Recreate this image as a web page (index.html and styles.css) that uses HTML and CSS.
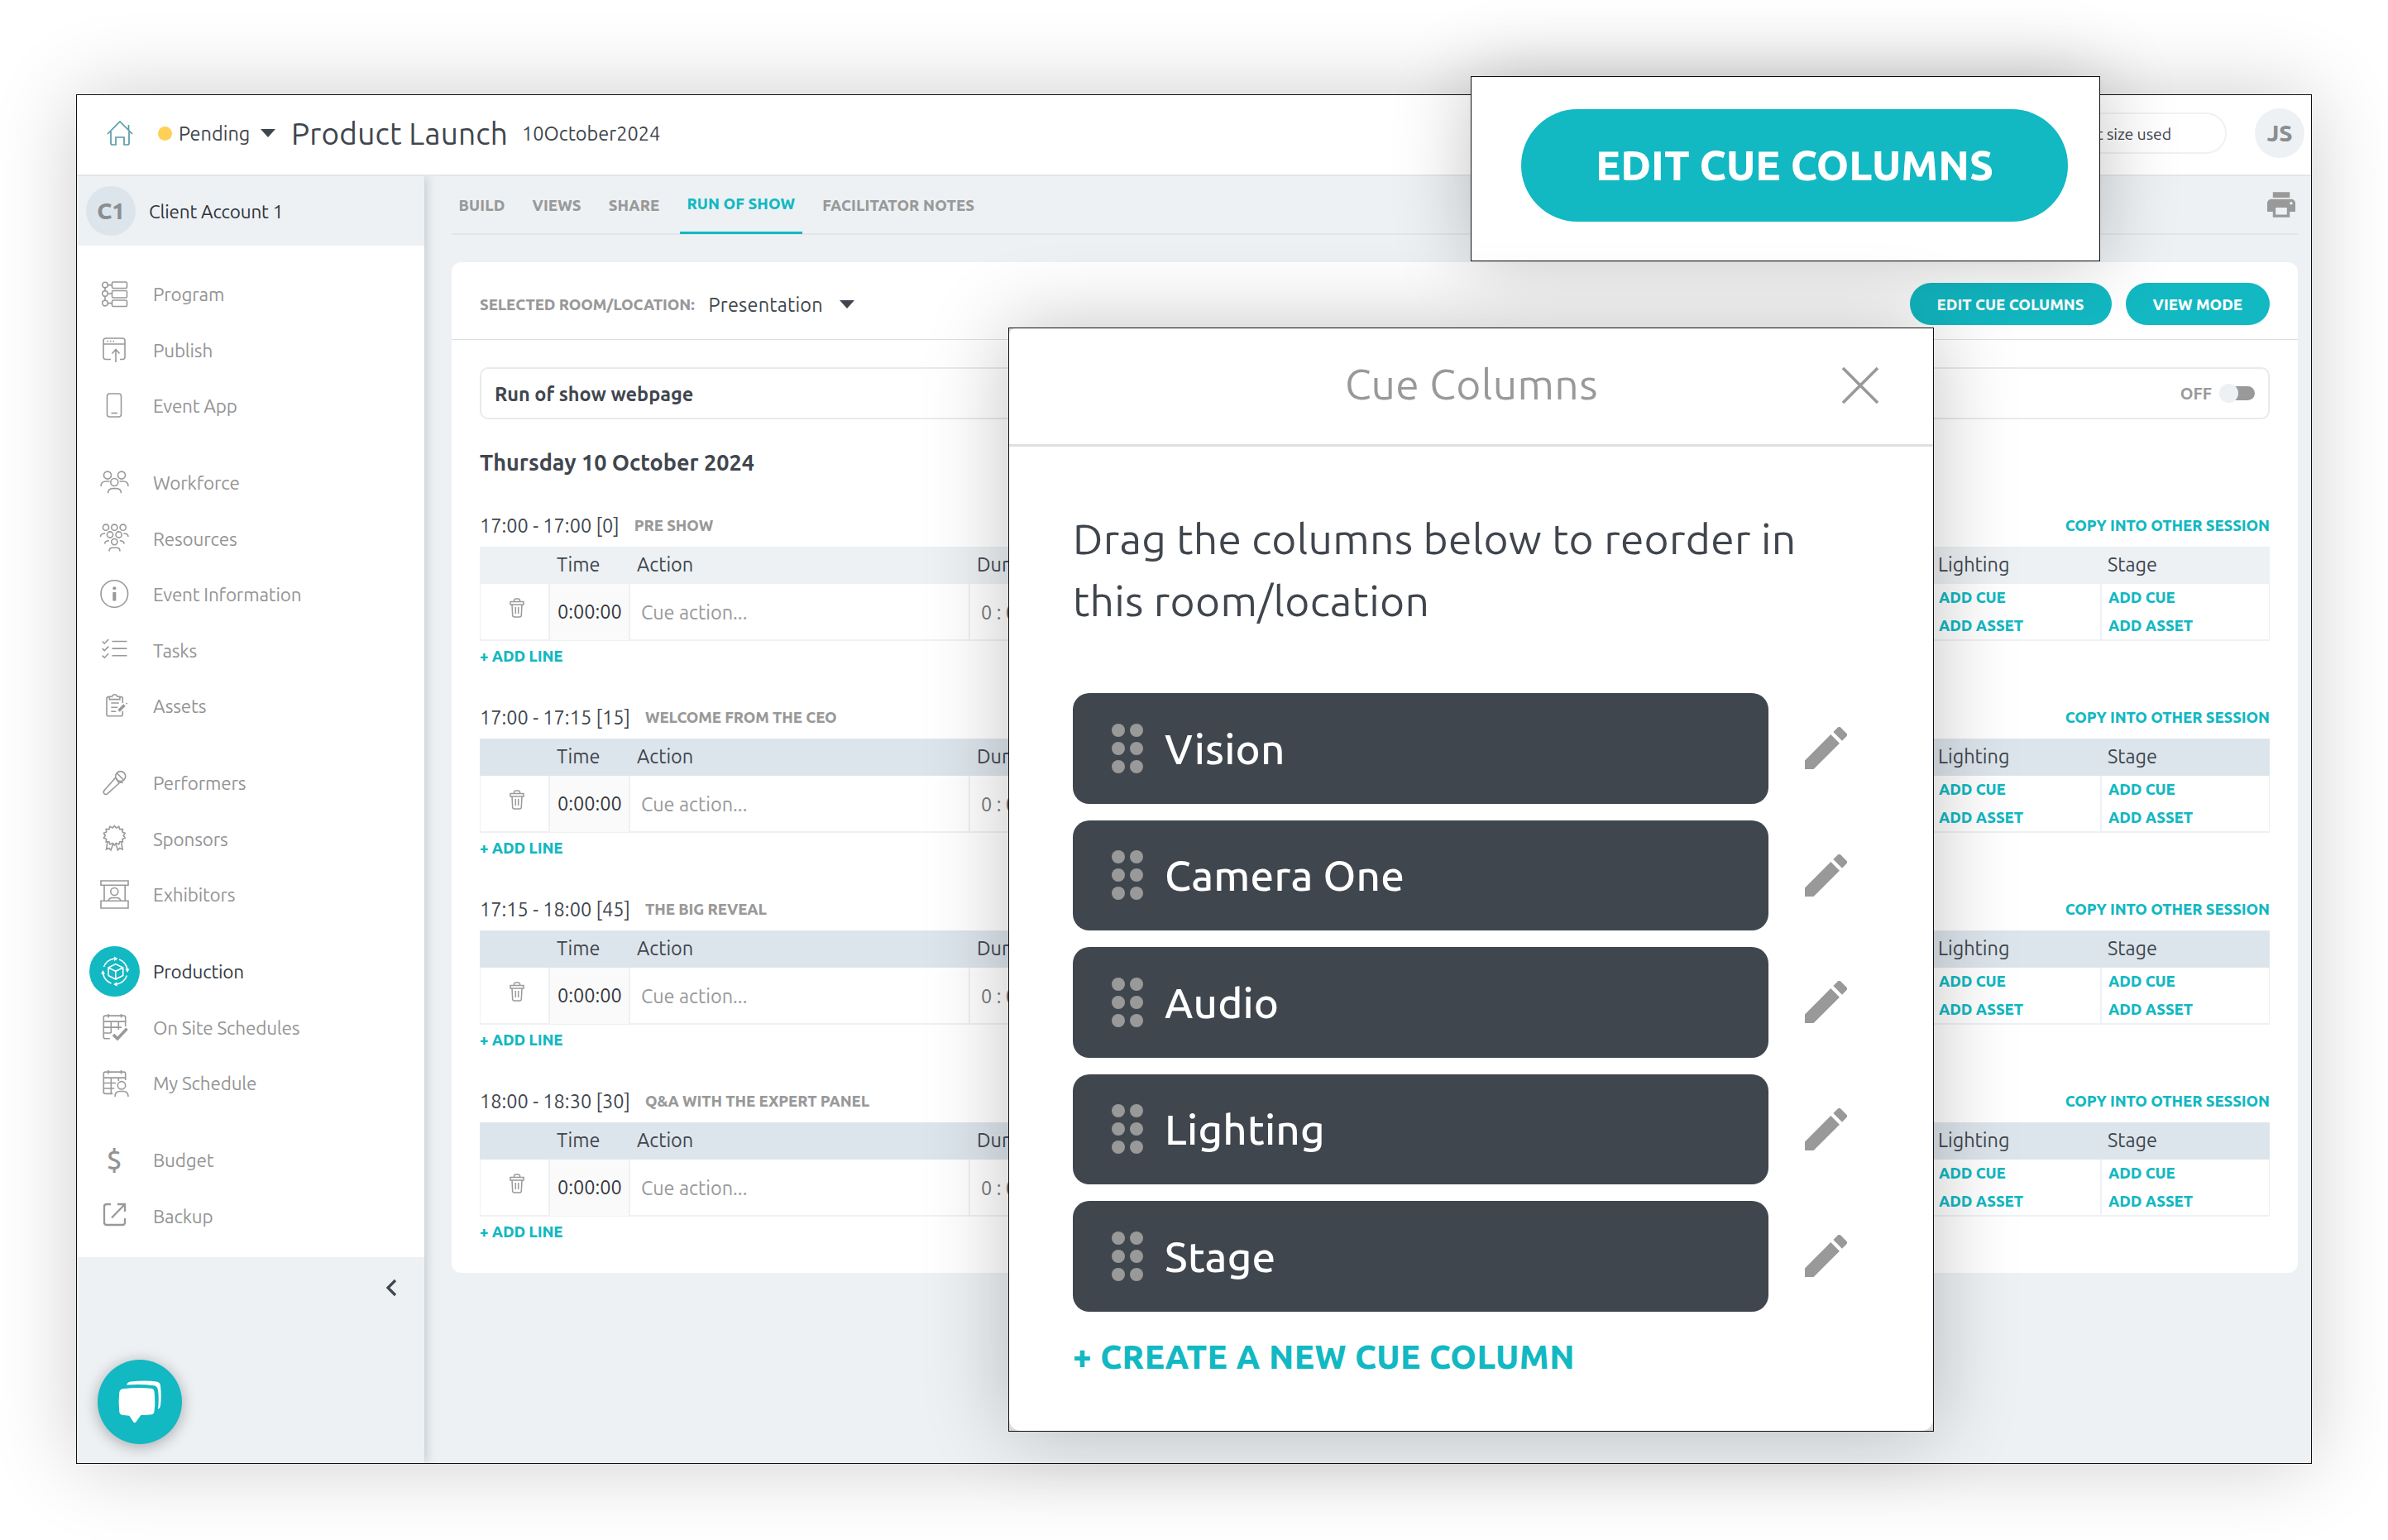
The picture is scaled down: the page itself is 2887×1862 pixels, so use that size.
FILE: index.html
```html
<!DOCTYPE html>
<html lang="en">
<head>
    <meta charset="UTF-8">
    <title>Product Launch - Run of Show</title>
    <link rel="stylesheet" href="styles.css">
</head>
<body>
    <div class="app">
        <header class="topbar">
            <svg class="home-icon" viewBox="0 0 32 32"><path d="M1 17 16 2l15 15M26.500 12V6M5 14v14q0 2 2 2h4V21h10v9h4q2 0 2-2V14" /></svg>
            <span class="status-dot"></span>
            <span class="status">Pending</span>
            <span class="caret"></span>
            <h1>Product Launch</h1>
            <span class="event-date">10October2024</span>
            <div class="usage">0% of event size used</div>
            <div class="avatar">JS</div>
        </header>

        <div class="body">
            <aside class="sidebar">
                <div class="account">
                    <div class="avatar account-avatar">C1</div>
                    <span>Client Account 1</span>
                </div>
                <nav class="menu">
                    <ul>
                        <li><svg class="icon" viewBox="0 0 36 36"><circle cx="7" cy="6.600" r="3.300"/><circle cx="7" cy="17" r="3.300"/><circle cx="7" cy="28.600" r="3.300"/><path d="M7 9.900v3.800M7 20.300v5M10.300 6.600h5M10.300 17h5M10.300 28.600h5"/><rect x="15.500" y="3" width="18" height="7.500" rx="1.500"/><rect x="15.500" y="13.500" width="18" height="8.500" rx="1.500"/><rect x="15.500" y="25" width="18" height="7.500" rx="1.500"/></svg>Program</li>
                        <li><svg class="icon" viewBox="0 0 36 36"><path d="M14 29.500H8q-3 0-3-3V7q0-3 3-3h20q3 0 3 3v19.500q0 3-3 3h-3M5 11h26M20 33V18M15.500 22.500 20 17.500l4.500 5M9.500 7.600h1.500M13 7.600h1.500M16.500 7.600H18"/></svg>Publish</li>
                        <li><svg class="icon" viewBox="0 0 36 36"><rect x="9.500" y="3" width="17" height="28" rx="3"/><path d="M14.500 26.500h7.500"/></svg>Event App</li>
                    </ul>
                    <ul>
                        <li><svg class="icon" viewBox="0 0 36 36"><circle cx="10" cy="8.600" r="4.500"/><circle cx="27" cy="8.600" r="4.500"/><circle cx="18.300" cy="17" r="4.500"/><path d="M2 22q0-6 6-6h4.500M35 22q0-6-6-6h-4.500M10.500 30.300q0-5.700 6-5.700h4q6 0 6 5.700"/></svg>Workforce</li>
                        <li><svg class="icon" viewBox="0 0 36 36"><circle cx="8" cy="4.700" r="3.600"/><circle cx="18.300" cy="4.700" r="3.600"/><circle cx="28.700" cy="4.700" r="3.600"/><circle cx="13" cy="13.500" r="3.600"/><circle cx="23.600" cy="13.500" r="3.600"/><circle cx="18.300" cy="22.100" r="3.600"/><path d="M1.500 16q0-4 5.500-4M35 16q0-4-5.500-4M6.700 24.500q0-3.700 5.200-3.700M30 24.500q0-3.700-5.200-3.700M12 33.500q0-4.300 4-4.300h5q4 0 4 4.300"/></svg>Resources</li>
                        <li><svg class="icon" viewBox="0 0 36 36"><circle cx="18.300" cy="17" r="16.300"/><circle class="fill" cx="18.300" cy="10.300" r="2"/><rect class="fill" x="16.300" y="15" width="4" height="10.500"/></svg>Event Information</li>
                        <li><svg class="icon" viewBox="0 0 36 36"><path d="m3.700 7.500 2.600 2.500 5-5M3.700 16.100l2.600 2.500 5-5M3.700 24.700l2.600 2.500 5-5M15.500 7.500h18M15.500 16.100h18M15.500 24.800h18"/></svg>Tasks</li>
                        <li><svg class="icon" viewBox="0 0 36 36"><path d="M12 6.600h-1q-2 0-2 2v19.100q0 2 2 2h15.300q2 0 2-2v-4M28.300 14V8.600q0-2-2-2h-1M12.300 9.600V6.300h3q1-2.500 3.300-2.500t3.300 2.500h3v3.300zM14.300 14h9.500M14.300 19.300h8M14.300 24.300h6"/><path class="thick" d="m23.500 23.500 7-7"/><path d="m32.500 14 1.200 1.200"/></svg>Assets</li>
                    </ul>
                    <ul>
                        <li><svg class="icon" viewBox="0 0 36 36"><circle cx="25.700" cy="9.600" r="6"/><path d="m20.200 12 3 4.700 5.500.7M19.700 11.200 6 26.700q-1.500 2.300 0 4 2 1.500 4 0L25 17M21.500 6l8 8"/></svg>Performers</li>
                        <li><svg class="icon" viewBox="0 0 36 36"><path d="m18.300 2.500 2.200 2.500 3.200-1.600 1.100 3.200 3.600-.1-.4 3.500 3.200 1.300-1.900 2.900 1.900 2.900-3.200 1.300.4 3.500-3.600-.1-1.100 3.200-3.200-1.600-2.200 2.500-2.200-2.500-3.200 1.600-1.100-3.200-3.600.1.400-3.500-3.200-1.300 1.900-2.900-1.900-2.900 3.200-1.300-.4-3.500 3.600.1 1.100-3.200L16.100 5zM9.800 23 8.500 31l3.500-1.500 2 2.500L16.500 25M26.800 23l1.300 8-3.500-1.500-2 2.500L20.100 25"/></svg>Sponsors</li>
                        <li><svg class="icon" viewBox="0 0 36 36"><path d="M2 1h33v5.300H2zM6 6.300v19M31.200 6.300v19M2 25.300h33V34H2zM11 25.300q1-3.800 5-3.800h5q4 0 5 3.800"/><circle cx="18.300" cy="14" r="4.500"/></svg>Exhibitors</li>
                    </ul>
                    <ul>
                        <li class="active"><span class="icon-circle"><svg class="icon" viewBox="0 0 36 36"><path d="m18.800 8.600 8.900 4.400v9.500L18.800 27 10 22.500V13zM10 13l8.800 4.300 8.900-4.300M18.800 17.300V27M4.500 12Q8 3.500 17 2M23 3q8 3 10 12M32.500 22.500Q29 31 20.500 33M13.500 32Q5.500 29 3.500 20"/><path class="fill" d="m17-.5 4.500 2.800L17 5zM30.500 14.500h5L33 19zM20.500 30.300 16 33l4.500 2.700zM1 20.500h5L3.500 16z"/></svg></span>Production</li>
                        <li><svg class="icon" viewBox="0 0 36 36"><path d="M31.700 17V6q0-1.900-2-1.900H7.300q-2 0-2 1.900v23.900q0 1.900 2 1.900h5.500M5.300 11.100h26.400M5.300 18.100H27M5.300 25h9M14.300 11.100V25M23.300 11.100v10M11 2v4.500M26.500 2v4.500"/><path class="thick" d="m17 27 5 5 11.500-12.300"/></svg>On Site Schedules</li>
                        <li><svg class="icon" viewBox="0 0 36 36"><path d="M31.700 14V6q0-1.900-2-1.900H7.300q-2 0-2 1.900v22.500q0 1.900 2 1.900h9M5.300 11.100h26.400M5.300 17.500H20M5.300 24h13M14.300 11.100v19M23.300 11.100v4M11 2v4.500M26.500 2v4.500M19 34q0-6.500 6-6.500h4q6 0 6 6.500"/><circle cx="27" cy="20.300" r="4.700"/></svg>My Schedule</li>
                    </ul>
                    <ul>
                        <li><span class="icon dollar">$</span>Budget</li>
                        <li><svg class="icon bold" viewBox="0 0 36 36"><path d="M14 4H9Q6 4 6 7v19q0 3 3 3h19q3 0 3-3v-5M22 4h9v9M31 4 15 20.500"/></svg>Backup</li>
                    </ul>
                </nav>
                <svg class="collapse" viewBox="0 0 14 22"><path d="M12 2 3 11l9 9"/></svg>
                <div class="chat">
                    <svg viewBox="0 0 54 52"><path d="M8 9.500q20-2.300 37-.5 3.500.5 4 4 1.500 13 0 24-.3 3.500-3.500 4-5 .8-10 .8h-4L25 50.500q-1.500 1.500-3 0L16.500 42.500q-6-.3-9-.8-3.500-.5-4-4-1.500-12 0-24 .7-3.700 4.500-4.200z" transform="translate(-1 1) scale(.93 .98)"/><path d="M11 5.500Q12 2 16 1.500q18-2 31 0 4.500.7 5 5 1.500 12 0 24-.5 3.500-3 4.500Q50.500 22 49 12q-.7-5-5-5.700Q28 4 11 5.500z"/></svg>
                </div>
            </aside>

            <main class="content">
                <div class="tabs">
                    <a>BUILD</a>
                    <a>VIEWS</a>
                    <a>SHARE</a>
                    <a class="current">RUN OF SHOW</a>
                    <a>FACILITATOR NOTES</a>
                    <svg class="print" viewBox="2 3 20 18"><path d="M19 8H5c-1.660 0-3 1.340-3 3v6h4v4h12v-4h4v-6c0-1.660-1.340-3-3-3zm-3 11H8v-5h8v5zm3-7c-.55 0-1-.45-1-1s.45-1 1-1 1 .45 1 1-.45 1-1 1zm-1-9H6v4h12V3z"/></svg>
                </div>

                <div class="card">
                    <div class="card-header">
                        <span class="label">SELECTED ROOM/LOCATION:</span>
                        <span class="room">Presentation</span>
                        <span class="caret"></span>
                        <button class="btn btn-edit">EDIT CUE COLUMNS</button>
                        <button class="btn">VIEW MODE</button>
                    </div>

                    <div class="webpage">
                        <strong>Run of show webpage</strong>
                        <span class="off">OFF</span>
                        <span class="toggle"></span>
                    </div>

                    <h2>Thursday 10 October 2024</h2>

                    <section class="session first">
                        <div class="session-title">
                            <span>17:00 - 17:00 [0]</span>
                            <span class="label">PRE SHOW</span>
                            <a class="link copy">COPY INTO OTHER SESSION</a>
                        </div>
                        <div class="row head">
                            <div></div><div>Time</div><div>Action</div><div>Duration</div><div>Lighting</div><div>Stage</div>
                        </div>
                        <div class="row cue">
                            <div class="bin"><svg viewBox="0 0 18 24"><path d="M1 4.500h16V8H1zM5.500 4V2.500Q6 1 7.500 1h3q1.500 0 2 1.500V4M3 8l.7 13q.2 2 2 2h6.600q1.800 0 2-2L15 8M7.300 11v8M10.700 11v8"/></svg></div>
                            <div class="time">0:00:00</div>
                            <div class="action">Cue action...</div>
                            <div class="duration">0 : 00 : 00</div>
                            <div class="links"><a class="link">ADD CUE</a><a class="link">ADD ASSET</a></div>
                            <div class="links"><a class="link">ADD CUE</a><a class="link">ADD ASSET</a></div>
                        </div>
                        <a class="link add-line">+ ADD LINE</a>
                    </section>

                    <section class="session">
                        <div class="session-title">
                            <span>17:00 - 17:15 [15]</span>
                            <span class="label">WELCOME FROM THE CEO</span>
                            <a class="link copy">COPY INTO OTHER SESSION</a>
                        </div>
                        <div class="row head">
                            <div></div><div>Time</div><div>Action</div><div>Duration</div><div>Lighting</div><div>Stage</div>
                        </div>
                        <div class="row cue">
                            <div class="bin"><svg viewBox="0 0 18 24"><path d="M1 4.500h16V8H1zM5.500 4V2.500Q6 1 7.500 1h3q1.500 0 2 1.500V4M3 8l.7 13q.2 2 2 2h6.600q1.800 0 2-2L15 8M7.300 11v8M10.700 11v8"/></svg></div>
                            <div class="time">0:00:00</div>
                            <div class="action">Cue action...</div>
                            <div class="duration">0 : 00 : 00</div>
                            <div class="links"><a class="link">ADD CUE</a><a class="link">ADD ASSET</a></div>
                            <div class="links"><a class="link">ADD CUE</a><a class="link">ADD ASSET</a></div>
                        </div>
                        <a class="link add-line">+ ADD LINE</a>
                    </section>

                    <section class="session">
                        <div class="session-title">
                            <span>17:15 - 18:00 [45]</span>
                            <span class="label">THE BIG REVEAL</span>
                            <a class="link copy">COPY INTO OTHER SESSION</a>
                        </div>
                        <div class="row head">
                            <div></div><div>Time</div><div>Action</div><div>Duration</div><div>Lighting</div><div>Stage</div>
                        </div>
                        <div class="row cue">
                            <div class="bin"><svg viewBox="0 0 18 24"><path d="M1 4.500h16V8H1zM5.500 4V2.500Q6 1 7.500 1h3q1.500 0 2 1.500V4M3 8l.7 13q.2 2 2 2h6.600q1.800 0 2-2L15 8M7.300 11v8M10.700 11v8"/></svg></div>
                            <div class="time">0:00:00</div>
                            <div class="action">Cue action...</div>
                            <div class="duration">0 : 00 : 00</div>
                            <div class="links"><a class="link">ADD CUE</a><a class="link">ADD ASSET</a></div>
                            <div class="links"><a class="link">ADD CUE</a><a class="link">ADD ASSET</a></div>
                        </div>
                        <a class="link add-line">+ ADD LINE</a>
                    </section>

                    <section class="session">
                        <div class="session-title">
                            <span>18:00 - 18:30 [30]</span>
                            <span class="label">Q&amp;A WITH THE EXPERT PANEL</span>
                            <a class="link copy">COPY INTO OTHER SESSION</a>
                        </div>
                        <div class="row head">
                            <div></div><div>Time</div><div>Action</div><div>Duration</div><div>Lighting</div><div>Stage</div>
                        </div>
                        <div class="row cue">
                            <div class="bin"><svg viewBox="0 0 18 24"><path d="M1 4.500h16V8H1zM5.500 4V2.500Q6 1 7.500 1h3q1.500 0 2 1.500V4M3 8l.7 13q.2 2 2 2h6.600q1.800 0 2-2L15 8M7.300 11v8M10.700 11v8"/></svg></div>
                            <div class="time">0:00:00</div>
                            <div class="action">Cue action...</div>
                            <div class="duration">0 : 00 : 00</div>
                            <div class="links"><a class="link">ADD CUE</a><a class="link">ADD ASSET</a></div>
                            <div class="links"><a class="link">ADD CUE</a><a class="link">ADD ASSET</a></div>
                        </div>
                        <a class="link add-line">+ ADD LINE</a>
                    </section>
                </div>
            </main>
        </div>
    </div>

    <div class="callout">
        <button class="btn btn-large">EDIT CUE COLUMNS</button>
    </div>

    <div class="modal">
        <div class="modal-inner">
            <div class="modal-header">
                <h3>Cue Columns</h3>
                <svg class="close" viewBox="0 0 46 46"><path d="m2 2 42 42M44 2 2 44"/></svg>
            </div>
            <div class="modal-body">
                <p>Drag the columns below to reorder in<br>this room/location</p>
                <ul class="columns">
                    <li><div class="column"><svg class="grip" viewBox="0 0 38 60"><circle cx="8" cy="8" r="8"/><circle cx="30" cy="8" r="8"/><circle cx="8" cy="30" r="8"/><circle cx="30" cy="30" r="8"/><circle cx="8" cy="52" r="8"/><circle cx="30" cy="52" r="8"/></svg>Vision</div><svg class="pencil" viewBox="3 3 18 18"><path d="M3 17.250V21h3.750L17.810 9.940l-3.750-3.750L3 17.250zM20.710 7.040a1 1 0 0 0 0-1.410l-2.340-2.340a1 1 0 0 0-1.410 0l-1.830 1.830 3.750 3.750 1.830-1.830z"/></svg></li>
                    <li><div class="column"><svg class="grip" viewBox="0 0 38 60"><circle cx="8" cy="8" r="8"/><circle cx="30" cy="8" r="8"/><circle cx="8" cy="30" r="8"/><circle cx="30" cy="30" r="8"/><circle cx="8" cy="52" r="8"/><circle cx="30" cy="52" r="8"/></svg>Camera One</div><svg class="pencil" viewBox="3 3 18 18"><path d="M3 17.250V21h3.750L17.810 9.940l-3.750-3.750L3 17.250zM20.710 7.040a1 1 0 0 0 0-1.410l-2.340-2.340a1 1 0 0 0-1.410 0l-1.830 1.830 3.750 3.750 1.830-1.830z"/></svg></li>
                    <li><div class="column"><svg class="grip" viewBox="0 0 38 60"><circle cx="8" cy="8" r="8"/><circle cx="30" cy="8" r="8"/><circle cx="8" cy="30" r="8"/><circle cx="30" cy="30" r="8"/><circle cx="8" cy="52" r="8"/><circle cx="30" cy="52" r="8"/></svg>Audio</div><svg class="pencil" viewBox="3 3 18 18"><path d="M3 17.250V21h3.750L17.810 9.940l-3.750-3.750L3 17.250zM20.710 7.040a1 1 0 0 0 0-1.410l-2.340-2.340a1 1 0 0 0-1.410 0l-1.830 1.830 3.750 3.750 1.830-1.830z"/></svg></li>
                    <li><div class="column"><svg class="grip" viewBox="0 0 38 60"><circle cx="8" cy="8" r="8"/><circle cx="30" cy="8" r="8"/><circle cx="8" cy="30" r="8"/><circle cx="30" cy="30" r="8"/><circle cx="8" cy="52" r="8"/><circle cx="30" cy="52" r="8"/></svg>Lighting</div><svg class="pencil" viewBox="3 3 18 18"><path d="M3 17.250V21h3.750L17.810 9.940l-3.750-3.750L3 17.250zM20.710 7.040a1 1 0 0 0 0-1.410l-2.340-2.340a1 1 0 0 0-1.410 0l-1.830 1.830 3.750 3.750 1.830-1.830z"/></svg></li>
                    <li><div class="column"><svg class="grip" viewBox="0 0 38 60"><circle cx="8" cy="8" r="8"/><circle cx="30" cy="8" r="8"/><circle cx="8" cy="30" r="8"/><circle cx="30" cy="30" r="8"/><circle cx="8" cy="52" r="8"/><circle cx="30" cy="52" r="8"/></svg>Stage</div><svg class="pencil" viewBox="3 3 18 18"><path d="M3 17.250V21h3.750L17.810 9.940l-3.750-3.750L3 17.250zM20.710 7.040a1 1 0 0 0 0-1.410l-2.340-2.340a1 1 0 0 0-1.410 0l-1.830 1.830 3.750 3.750 1.830-1.830z"/></svg></li>
                </ul>
                <a class="link create">+ CREATE A NEW CUE COLUMN</a>
            </div>
        </div>
    </div>
</body>
</html>
```

FILE: styles.css
```css
:root {
    --teal: #12b8c2;
    --dark: #40464e;
    --gray: #999999;
    --pale: #edf1f4;
    --blue-gray: #dde5ec;
    --line: #e3e6e9;
}

* {
    box-sizing: border-box;
}

body {
    margin: 0;
    width: 2887px;
    height: 1862px;
    overflow: hidden;
    position: relative;
    background: #fff;
    color: var(--dark);
    font-family: Ubuntu, "Noto Sans", sans-serif;
    font-size: 23.5px;
    font-weight: 430;
    letter-spacing: 0;
    white-space: nowrap;
}

h1, h2, h3, p, ul {
    margin: 0;
    padding: 0;
    font-weight: 430;
    list-style: none;
}

svg {
    flex-shrink: 0;
}

.app {
    width: 2703px;
    height: 1656px;
    margin: 114px 0 0 92px;
    border: 1px solid #111;
    background: var(--pale);
    box-shadow: 0 0 95px rgba(0, 0, 0, 0.2);
    display: flex;
    flex-direction: column;
}

/* top bar */
.topbar {
    height: 98px;
    display: flex;
    align-items: center;
    padding: 0 8px 4px 36px;
    background: #fff;
    border-bottom: 2px solid var(--line);
}

.home-icon {
    width: 32px;
    height: 32px;
    fill: none;
    stroke: #5a9caa;
    stroke-width: 1.7;
}

.status-dot {
    width: 17px;
    height: 17px;
    margin: 0 8px 0 30px;
    border-radius: 50%;
    background: #ffcf56;
}

.status {
    width: 99px;
}

.caret {
    border: 9px solid transparent;
    border-top: 10px solid var(--dark);
    border-bottom: 0;
}

h1 {
    margin-left: 19px;
    width: 279px;
    font-size: 37px;
    letter-spacing: 0.2px;
}

.event-date {
    flex: 1;
}

.usage {
    height: 50px;
    line-height: 48px;
    padding: 0 65px 0 40px;
    border: 2px solid #eef2f5;
    border-radius: 25px;
    font-size: 19.5px;
    letter-spacing: -0.1px;
}

.avatar {
    width: 60px;
    height: 60px;
    margin-left: 34px;
    border-radius: 50%;
    background: var(--pale);
    color: #8b8e91;
    font-size: 28px;
    font-weight: 800;
    line-height: 60px;
    text-align: center;
}

.body {
    flex: 1;
    display: flex;
}

/* sidebar */
.sidebar {
    width: 420px;
    display: flex;
    flex-direction: column;
    align-items: flex-start;
    z-index: 1;
    background: var(--pale);
    box-shadow: 2px 0 12px rgba(60, 80, 95, 0.25);
    clip-path: inset(0 -30px 0 0);
    font-size: 22.5px;
    letter-spacing: -0.2px;
}

.account {
    height: 84px;
    display: flex;
    align-items: center;
    gap: 16px;
    padding-left: 11px;
    color: #2f343a;
}

.account-avatar {
    margin: 0;
    background: var(--blue-gray);
}

.menu {
    width: 100%;
    height: 1223px;
    padding-top: 25px;
    background: #fff;
    color: #949494;
}

.menu ul {
    margin-bottom: 25.5px;
}

.menu li {
    height: 67.5px;
    display: flex;
    align-items: center;
    gap: 29px;
    padding-left: 27px;
}

.menu .active {
    gap: 16px;
    padding-left: 15px;
    color: #33383f;
}

.icon {
    width: 36px;
    height: 36px;
    fill: none;
    stroke: var(--gray);
    stroke-width: 1.6;
    overflow: visible;
}

.icon .fill {
    fill: var(--gray);
    stroke: none;
}

.icon .thick {
    stroke-width: 3.6;
}

.icon.bold {
    stroke-width: 2.3;
}

.icon-circle {
    width: 61px;
    height: 61px;
    display: grid;
    place-items: center;
    border-radius: 50%;
    background: var(--teal);
}

.icon-circle .icon {
    stroke: #fff;
}

.icon-circle .fill {
    fill: #fff;
}

.dollar {
    font-size: 33px;
    font-weight: 500;
    line-height: 34px;
    text-align: center;
}

.collapse {
    width: 14px;
    height: 22px;
    margin: 26px 0 0 373px;
    fill: none;
    stroke: #40464e;
    stroke-width: 3.2;
}

.chat {
    width: 102px;
    height: 102px;
    margin: 76px 0 0 25px;
    display: grid;
    place-items: center;
    border-radius: 50%;
    background: var(--teal);
    box-shadow: 0 3px 18px rgba(0, 0, 0, 0.3);
}

.chat svg {
    width: 54px;
    height: 52px;
    fill: #fff;
}

/* main area */
.content {
    flex: 1;
    padding: 0 16px 0 33px;
}

.tabs {
    height: 71px;
    display: flex;
    align-items: flex-start;
    gap: 16px;
    border-bottom: 2px solid var(--line);
    color: var(--gray);
    font-size: 18.5px;
    font-weight: 800;
    letter-spacing: 0.1px;
}

.tabs a {
    height: 70px;
    line-height: 70px;
    padding: 0 8.5px;
}

.tabs .current {
    line-height: 66px;
    color: var(--teal);
    border-bottom: 3px solid var(--teal);
}

.print {
    width: 34px;
    height: 31px;
    margin: 19px 3px 0 auto;
    fill: var(--gray);
}

.card {
    height: 1222px;
    margin-top: 33px;
    border-radius: 12px;
    background: #fff;
}

.card-header {
    height: 94px;
    display: flex;
    align-items: center;
    padding: 8px 34px 0;
    border-bottom: 1px solid #dcdfe2;
}

.label {
    color: var(--gray);
    font-size: 18.5px;
    font-weight: 800;
    letter-spacing: -0.1px;
}

.room {
    width: 158px;
    margin-left: 17px;
    letter-spacing: 0.2px;
}

.btn {
    height: 51px;
    padding: 0 33px;
    border: 0;
    border-radius: 26px;
    background: var(--teal);
    color: #fff;
    font: 800 18.5px Ubuntu, "Noto Sans", sans-serif;
    letter-spacing: 0;
}

.btn-edit {
    margin: 0 17px 0 auto;
}

.webpage {
    height: 63px;
    display: flex;
    align-items: center;
    margin: 33px 34px 0;
    padding: 0 16px;
    border: 2px solid #e8eaec;
    border-radius: 10px;
}

.webpage strong {
    flex: 1;
    font-weight: 750;
}

.off {
    color: var(--gray);
    font-size: 20px;
    font-weight: 750;
}

.toggle {
    width: 34px;
    height: 17px;
    margin-left: 18px;
    border-radius: 9px;
    background: var(--gray);
    position: relative;
}

.toggle::before {
    content: "";
    position: absolute;
    left: -9px;
    top: -3px;
    width: 23px;
    height: 23px;
    border-radius: 50%;
    background: var(--pale);
}

h2 {
    height: 34px;
    line-height: 34px;
    margin: 35px 34px 0;
    font-size: 27px;
    font-weight: 750;
    letter-spacing: 0;
}

.session {
    height: 232px;
    margin: 0 34px;
}

.session.first {
    margin-top: 42px;
}

.session-title {
    height: 43px;
    display: flex;
    align-items: center;
    gap: 18px;
    padding-bottom: 10px;
}

.link {
    color: var(--teal);
    font-size: 18.5px;
    font-weight: 800;
    letter-spacing: -0.1px;
}

.copy {
    margin-left: auto;
}

.row {
    display: grid;
    grid-template-columns: 84px 97px 411px 1fr 205px 205px;
}

.head {
    height: 45px;
    line-height: 43px;
    background: var(--blue-gray);
}

.first .head {
    background: var(--pale);
}

.head div {
    padding-left: 9px;
}

.cue {
    grid-template-columns: 82px 97px 411px 1fr 205px 204px;
    height: 69px;
    border: 1px solid #eef1f3;
    border-top: 0;
    border-bottom-width: 2px;
}

.cue > div {
    border-left: 2px solid #eef1f3;
}

.cue > .bin {
    border-left: 0;
    padding: 17px 0 0 35px;
}

.bin svg {
    width: 18px;
    height: 24px;
    fill: none;
    stroke: var(--gray);
    stroke-width: 1.5;
}

.time {
    padding-left: 9px;
    line-height: 67px;
    background: #fafafa;
    color: #33383f;
}

.action {
    padding-left: 13px;
    line-height: 68px;
    color: var(--gray);
}

.duration {
    padding-left: 13px;
    line-height: 68px;
    color: #777;
}

.links {
    display: flex;
    flex-direction: column;
    padding-left: 8px;
    line-height: 33.5px;
}

.add-line {
    line-height: 36px;
}

/* magnified button */
.callout {
    position: absolute;
    left: 1778px;
    top: 92px;
    width: 761px;
    height: 224px;
    padding: 39px 0 0 60px;
    border: 1px solid #111;
    background: #fff;
    box-shadow: 0 0 95px rgba(0, 0, 0, 0.24);
}

.btn-large {
    width: 661px;
    height: 136px;
    padding-bottom: 3px;
    border-radius: 68px;
    font-size: 50px;
}

/* magnified dialog */
.modal {
    position: absolute;
    left: 1219px;
    top: 396px;
    width: 1119px;
    height: 1335px;
    border: 1px solid #111;
    background: #dadada;
    box-shadow: 0 0 95px rgba(0, 0, 0, 0.24);
}

.modal-inner {
    height: 100%;
    border-radius: 8px 0 14px 14px;
    background: #fff;
}

.modal-header {
    height: 143px;
    display: flex;
    align-items: center;
    padding: 0 65px 5px 406px;
    border-bottom: 3px solid #dedfe0;
}

h3 {
    flex: 1;
    padding-bottom: 2px;
    color: var(--gray);
    font-size: 51.5px;
    letter-spacing: 0.4px;
}

.close {
    width: 46px;
    height: 46px;
    margin-top: 3px;
    fill: none;
    stroke: var(--gray);
    stroke-width: 3.6;
}

.modal-body {
    padding: 74px 77px 0;
}

.modal-body p {
    font-size: 51.5px;
    line-height: 75px;
    letter-spacing: 0.3px;
}

.columns {
    display: flex;
    flex-direction: column;
    gap: 20px;
    margin-top: 74px;
}

.columns li {
    height: 133.5px;
    display: flex;
    align-items: center;
    gap: 44px;
}

.column {
    width: 841px;
    height: 100%;
    display: flex;
    align-items: center;
    gap: 26px;
    padding-left: 47px;
    border-radius: 20px;
    background: var(--dark);
    color: #fff;
    font-size: 51px;
    font-weight: 530;
    letter-spacing: 0.2px;
}

.grip {
    width: 38px;
    height: 60px;
    fill: var(--gray);
}

.pencil {
    width: 51px;
    height: 51px;
    fill: var(--gray);
}

.create {
    display: block;
    margin-top: 27px;
    font-size: 40px;
    line-height: 56px;
    letter-spacing: 0.5px;
}
```
